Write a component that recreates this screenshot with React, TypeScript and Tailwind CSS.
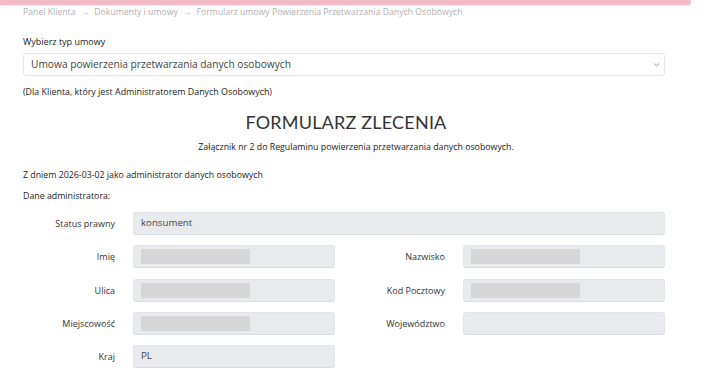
import React from "react";

const font = { fontFamily: "'Open Sans', 'Noto Sans', sans-serif" };

function Field({ filled, text, span }: { filled?: boolean; text?: string; span?: boolean }) {
  return (
    <div
      className={`h-[23px] rounded-[3px] bg-[#e9eaed] border border-[#e2e4e8] border-b-[#d8dbe0] flex items-center ${span ? "col-span-3" : ""}`}
    >
      {filled && <div className="ml-[7px] w-[109px] h-[15px] bg-[#d6d6d6]" />}
      {text && <span className="ml-[7px] text-[9.7px] text-[#444]">{text}</span>}
    </div>
  );
}

function Label({ children }: { children: React.ReactNode }) {
  return <div className="text-right pr-[18px] text-[9px] text-[#333] leading-none">{children}</div>;
}

export default function App() {
  return (
    <div className="w-[706px] h-[387px] bg-white overflow-hidden" style={font}>
      <div className="w-[691px] h-[5px] bg-[#f4bcc6] rounded-br-[3px] shadow-[0_1px_2px_rgba(0,0,0,0.08)]" />
      <div className="px-[23px] w-[688px]">
        <div className="mt-[2px] text-[8.7px] text-[#b0b0b0] leading-[10px] flex gap-[5px]">
          <span>Panel Klienta</span>
          <span>→</span>
          <span>Dokumenty i umowy</span>
          <span>→</span>
          <span>Formularz umowy Powierzenia Przetwarzania Danych Osobowych</span>
        </div>
        <div className="mt-[20px] text-[9px] text-[#222] leading-[10px]">Wybierz typ umowy</div>
        <div className="mt-[6px] h-[23px] border border-[#e3e5e9] rounded-[3px] flex items-center justify-between pl-[7px] pr-[4px]">
          <span className="text-[10.2px] text-[#444]">Umowa powierzenia przetwarzania danych osobowych</span>
          <svg width="7" height="5" viewBox="0 0 7 5" fill="none" stroke="#888" strokeWidth="0.9">
            <path d="M1 1.5 L3.5 3.8 L6 1.5" />
          </svg>
        </div>
        <div className="mt-[11px] text-[8.9px] text-[#222] leading-[10px]">(Dla Klienta, który jest Administratorem Danych Osobowych)</div>
        <div className="mt-[14px] pl-[4px] text-center text-[18px] text-[#333] leading-[22px] tracking-[0.2px]" style={{ fontFamily: "Lato, sans-serif" }}>FORMULARZ ZLECENIA</div>
        <div className="mt-[9px] pl-[24px] text-center text-[8.8px] text-[#222] leading-[10px]">
          Załącznik nr 2 do Regulaminu powierzenia przetwarzania danych osobowych.
        </div>
        <div className="mt-[18px] text-[8.8px] text-[#222] leading-[10px]">Z dniem 2026-03-02 jako administrator danych osobowych</div>
        <div className="mt-[11px] text-[8.8px] text-[#222] leading-[10px]">Dane administratora:</div>
        <div className="mt-[11px] grid grid-cols-[110px_202px_128px_202px] gap-y-[10.25px] items-center">
          <Label>Status prawny</Label>
          <Field span text="konsument" />
          <Label>Imię</Label>
          <Field filled />
          <Label>Nazwisko</Label>
          <Field filled />
          <Label>Ulica</Label>
          <Field filled />
          <Label>Kod Pocztowy</Label>
          <Field filled />
          <Label>Miejscowość</Label>
          <Field filled />
          <Label>Województwo</Label>
          <Field />
          <Label>Kraj</Label>
          <Field text="PL" />
        </div>
      </div>
    </div>
  );
}
